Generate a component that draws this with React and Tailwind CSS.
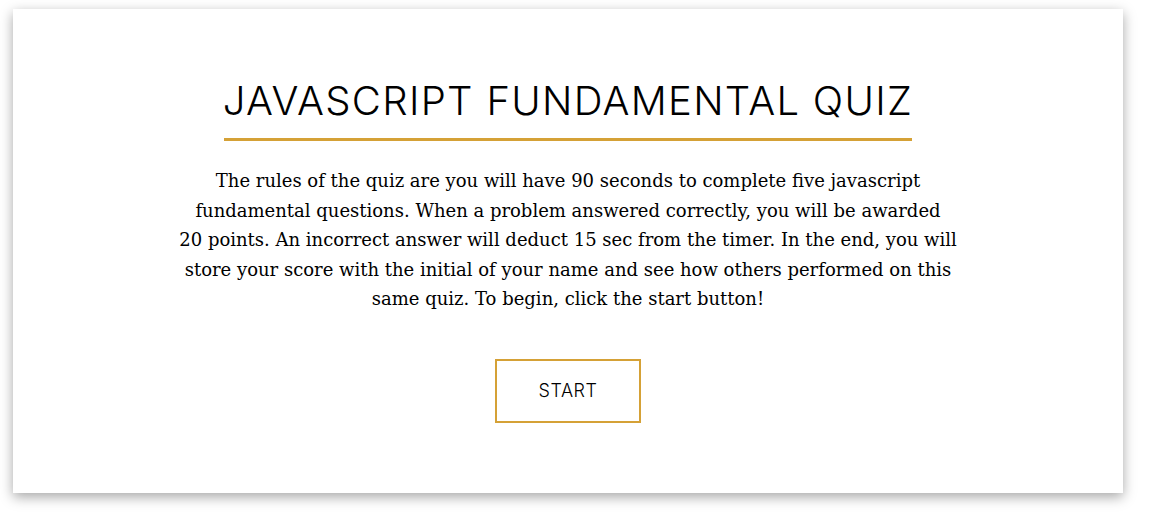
export default function App() {
  return (
    <div className="w-[1156px] h-[513px] bg-white pt-[9px] pl-[13px]">
      <div className="w-[1110px] h-[484px] bg-white shadow-[0_4px_12px_rgba(0,0,0,0.35)] flex flex-col items-center">
        <h1
          className="mt-[68px] text-[40px] leading-[48px] font-light text-black tracking-[1.3px]"
          style={{ fontFamily: "Inter, 'Open Sans', sans-serif" }}
        >
          JAVASCRIPT FUNDAMENTAL QUIZ
        </h1>
        <div className="w-[688px] h-[3px] bg-[#d5a136] mt-[13px]" />
        <p
          className="mt-[25px] text-center text-[18px] leading-[29.5px] text-black"
          style={{ fontFamily: "'DejaVu Serif', serif" }}
        >
          The rules of the quiz are you will have 90 seconds to complete five javascript
          <br />
          fundamental questions. When a problem answered correctly, you will be awarded
          <br />
          20 points. An incorrect answer will deduct 15 sec from the timer. In the end, you will
          <br />
          store your score with the initial of your name and see how others performed on this
          <br />
          same quiz. To begin, click the start button!
        </p>
        <button
          className="mt-[45px] w-[146px] h-[64px] border-2 border-[#d5a136] text-[18px] font-light text-black tracking-[0.5px]"
          style={{ fontFamily: "Inter, 'Open Sans', sans-serif" }}
        >
          START
        </button>
      </div>
    </div>
  );
}
